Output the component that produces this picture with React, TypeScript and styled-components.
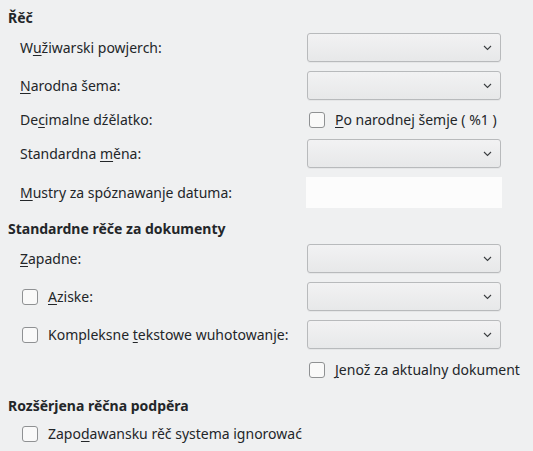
import React from "react";
import styled, { createGlobalStyle } from "styled-components";

const GlobalStyle = createGlobalStyle`
  html, body {
    margin: 0;
    padding: 0;
    background: #eff0f1;
  }
  body {
    font-family: "Noto Sans", "Open Sans", sans-serif;
    font-size: 14px;
    color: #232629;
  }
`;

const Page = styled.div`
  width: 533px;
  height: 451px;
  box-sizing: border-box;
  padding: 9px 0 0 8px;
  display: flex;
  flex-direction: column;
`;

const SectionTitle = styled.div<{ $top?: number }>`
  font-weight: bold;
  height: 18px;
  line-height: 18px;
  margin-top: ${(p) => p.$top ?? 0}px;
`;

const Rows = styled.div<{ $top: number }>`
  display: flex;
  flex-direction: column;
  gap: 9px;
  margin-top: ${(p) => p.$top}px;
  padding-left: 12px;
`;

const Row = styled.div<{ $h: number }>`
  display: grid;
  grid-template-columns: 287px 194px;
  align-items: center;
  height: ${(p) => p.$h}px;
`;

const Label = styled.label`
  display: flex;
  align-items: center;
  gap: 10px;
  white-space: nowrap;
`;

const CheckLabel = styled(Label)`
  padding-left: 2px;
`;

const Box = styled.span`
  width: 14px;
  height: 14px;
  border: 1px solid #8f9193;
  border-radius: 3px;
  background: #f9f9f9;
  flex: none;
`;

const Combo = styled.div`
  height: 27px;
  border: 1px solid #b8babc;
  border-radius: 3px;
  background: linear-gradient(#f2f2f3, #e7e8e9);
  display: flex;
  align-items: center;
  justify-content: flex-end;
  padding-right: 8px;
  box-shadow: 0 1px 0 rgba(0, 0, 0, 0.04);
`;

const Field = styled.div`
  height: 31px;
  margin-left: -1px;
  width: 196px;
  background: #fcfcfc;
`;

const U = styled.span`
  text-decoration: underline;
  text-underline-offset: 2px;
`;

const Chevron = () => (
  <svg width="9" height="6" viewBox="0 0 9 6">
    <path d="M1 1 L4.5 4.5 L8 1" fill="none" stroke="#3b3e41" strokeWidth="1.1" />
  </svg>
);

const Select = () => (
  <Combo>
    <Chevron />
  </Combo>
);

const Check: React.FC<{ children: React.ReactNode }> = ({ children }) => (
  <CheckLabel>
    <Box />
    <span>{children}</span>
  </CheckLabel>
);

export default function App() {
  return (
    <>
      <GlobalStyle />
      <Page>
        <SectionTitle>Řěč</SectionTitle>
        <Rows $top={6}>
          <Row $h={29}>
            <Label>
              <span>
                W<U>u</U>žiwarski powjerch:
              </span>
            </Label>
            <Select />
          </Row>
          <Row $h={29}>
            <Label>
              <span>
                <U>N</U>arodna šema:
              </span>
            </Label>
            <Select />
          </Row>
          <Row $h={21}>
            <Label>
              <span>
                De<U>c</U>imalne dźělatko:
              </span>
            </Label>
            <Check>
              <U>P</U>o narodnej šemje ( %1 )
            </Check>
          </Row>
          <Row $h={29}>
            <Label>
              <span>
                Standardna <U>m</U>ěna:
              </span>
            </Label>
            <Select />
          </Row>
          <Row $h={29}>
            <Label>
              <span>
                <U>M</U>ustry za spóznawanje datuma:
              </span>
            </Label>
            <Field />
          </Row>
        </Rows>
        <SectionTitle $top={14}>Standardne rěče za dokumenty</SectionTitle>
        <Rows $top={6}>
          <Row $h={29}>
            <Label>
              <span>
                <U>Z</U>apadne:
              </span>
            </Label>
            <Select />
          </Row>
          <Row $h={29}>
            <Check>
              <U>A</U>ziske:
            </Check>
            <Select />
          </Row>
          <Row $h={29}>
            <Check>
              Kompleksne <U>t</U>ekstowe wuhotowanje:
            </Check>
            <Select />
          </Row>
          <Row $h={23}>
            <span />
            <Check>
              <U>J</U>enož za aktualny dokument
            </Check>
          </Row>
        </Rows>
        <SectionTitle $top={16}>Rozšěrjena rěčna podpěra</SectionTitle>
        <Rows $top={8}>
          <Row $h={21}>
            <Check>
              Zapo<U>d</U>awansku rěč systema ignorować
            </Check>
          </Row>
        </Rows>
      </Page>
    </>
  );
}
